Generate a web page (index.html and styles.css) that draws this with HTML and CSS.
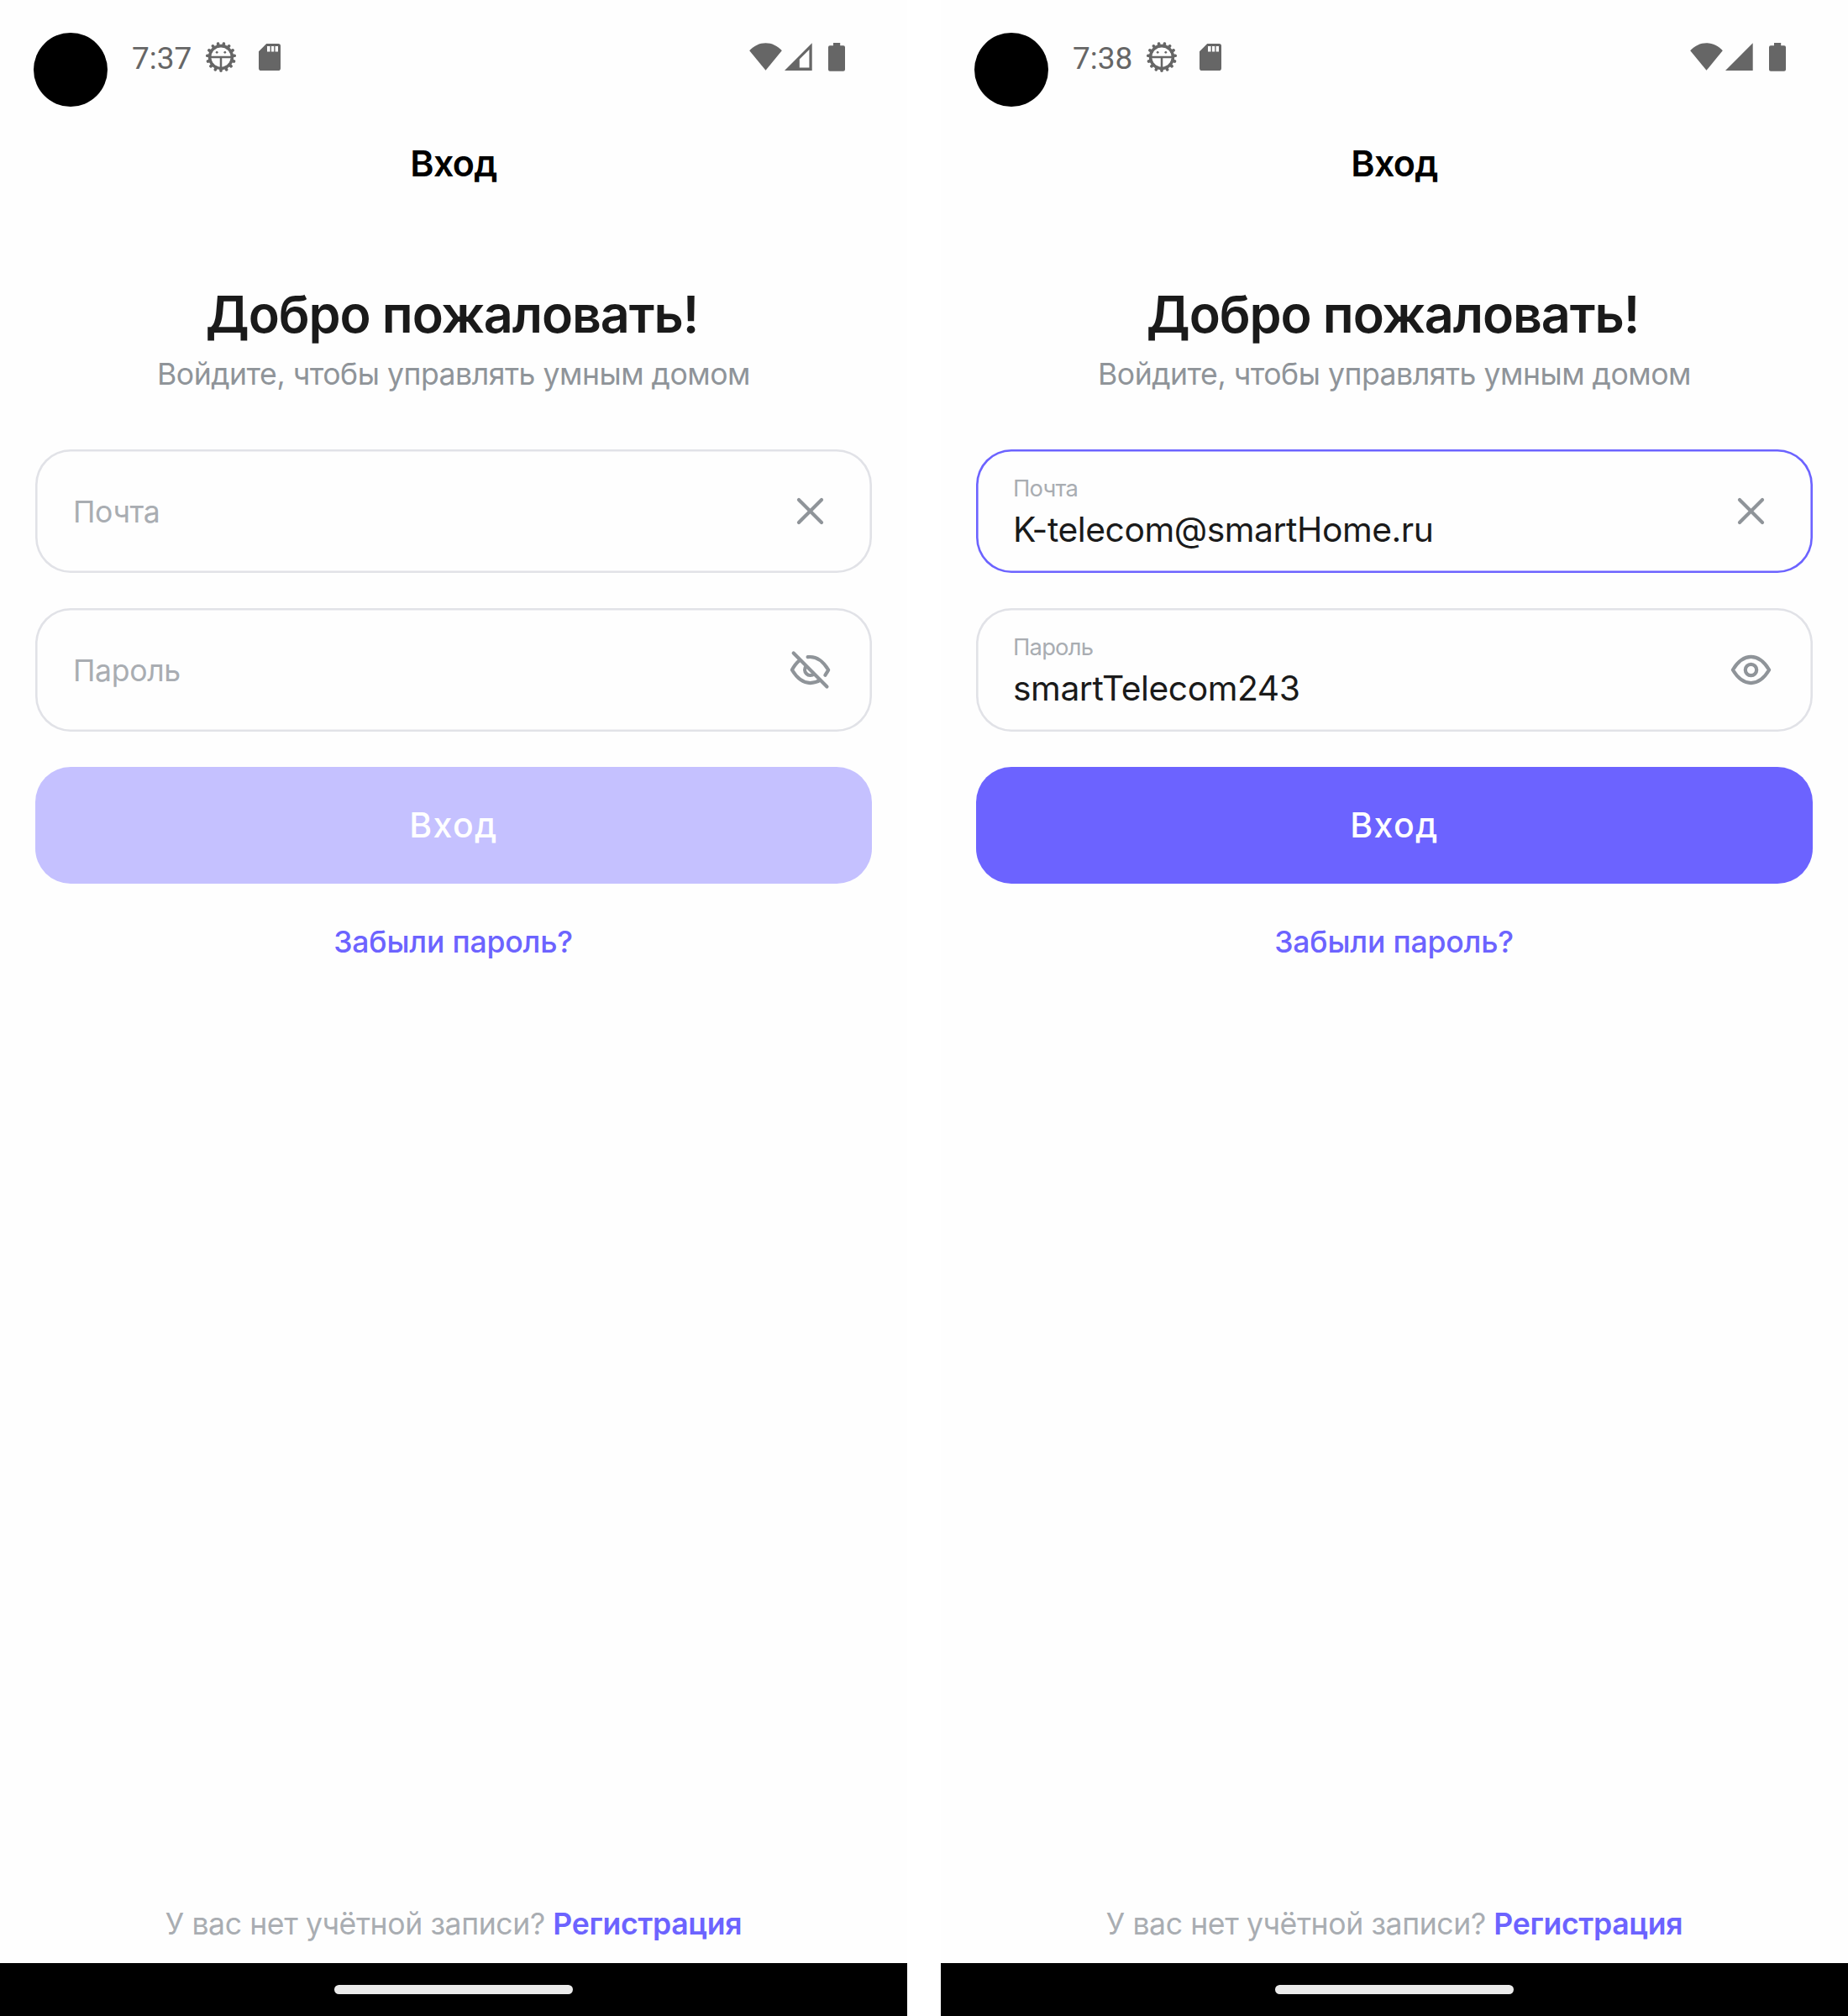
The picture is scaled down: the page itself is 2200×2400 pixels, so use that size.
FILE: index.html
```html
<!DOCTYPE html>
<html lang="ru">
<head>
<meta charset="utf-8">
<title>Вход</title>
<link rel="stylesheet" href="styles.css">
</head>
<body>
<svg class="sprite" aria-hidden="true">
  <symbol id="debug" viewBox="-18 -18 36 36">
    <path d="M0 13.5V16.2M5.49 12.34L6.7 14.9M10.03 9.03L12.1 10.9M12.84 4.17L15.5 5.03M13.43-1.42L16.2-1.7M11.69-6.75L14.1-8.15M7.94-10.92L9.6-13.2M2.81-13.2L3.4-15.9M-5.49 12.34L-6.7 14.9M-10.03 9.03L-12.1 10.9M-12.84 4.17L-15.5 5.03M-13.43-1.42L-16.2-1.7M-11.69-6.75L-14.1-8.15M-7.94-10.92L-9.6-13.2M-2.81-13.2L-3.4-15.9" fill="none" stroke="currentColor" stroke-width="3.6" stroke-linecap="round"/>
    <circle r="13.4" fill="none" stroke="currentColor" stroke-width="3.6"/>
    <path d="M-12 0H12M0 0V12" fill="none" stroke="currentColor" stroke-width="2.5"/>
    <circle cx="-4.8" cy="-5.7" r="1.4" fill="currentColor"/><circle cx="4.8" cy="-5.7" r="1.4" fill="currentColor"/>
  </symbol>
  <symbol id="sd" viewBox="0 0 26 32">
    <path fill="currentColor" fill-rule="evenodd" d="M9.2 0H23.2A2.8 2.8 0 0 1 26 2.8V29.2A2.8 2.8 0 0 1 23.2 32H2.8A2.8 2.8 0 0 1 0 29.2V9.2ZM10 3V9.6H13.6V3ZM15 3V9.6H18.2V3ZM19.6 3V9.6H23V3Z"/>
  </symbol>
  <symbol id="wifi" viewBox="0 0 39 34"><path fill="currentColor" d="M.2 9.3C5.4 3.5 12 .2 19.5.2S33.6 3.5 38.8 9.3L19.5 32.8Z"/></symbol>
  <symbol id="signal-half" viewBox="0 0 33 34"><path fill="currentColor" fill-rule="evenodd" d="M0 33L32.7 .3V33ZM17.8 19.4V29.6H29.4V8Z"/></symbol>
  <symbol id="signal-full" viewBox="0 0 33 34"><path fill="currentColor" d="M0 33L32.7 .3V33Z"/></symbol>
  <symbol id="battery" viewBox="0 0 20 34"><path fill="currentColor" d="M6 0H14.2V3.3H18A2 2 0 0 1 20 5.3V31.8A2 2 0 0 1 18 33.8H2A2 2 0 0 1 0 31.8V5.3A2 2 0 0 1 2 3.3H6Z"/></symbol>
  <symbol id="clear" viewBox="0 0 24 24"><path d="M6.85 6.85L17.15 17.15M17.15 6.85L6.85 17.15"/></symbol>
  <symbol id="eye" viewBox="0 0 24 24">
    <path d="M3.75 12C6 8.3 8.8 6.08 12 6.08S18 8.3 20.25 12C18 15.7 15.2 17.92 12 17.92S6 15.7 3.75 12Z"/>
    <circle cx="12" cy="12" r="2.55"/>
  </symbol>
  <symbol id="eye-off" viewBox="0 0 24 24">
    <path d="M10.9 6.17C15 5.6 17.9 8.1 20.25 12C19.8 12.9 19.3 13.6 18.8 14.4M7.2 7.7C5.8 8.8 4.7 10.3 3.75 12C6 15.7 8.8 17.92 12 17.92C13.7 17.92 15.2 17.5 16.6 16.6M10.2 10.2A2.55 2.55 0 0 0 13.8 13.8M4.45 4.4L19.6 19.6"/>
  </symbol>
</svg>

<main class="board">
  <section class="screen">
    <div class="camera"></div>
    <div class="status">
      <span class="clock">7:37</span>
      <svg class="ic-debug"><use href="#debug"/></svg>
      <svg class="ic-sd"><use href="#sd"/></svg>
      <span class="spacer"></span>
      <svg class="ic-wifi"><use href="#wifi"/></svg>
      <svg class="ic-signal"><use href="#signal-half"/></svg>
      <svg class="ic-battery"><use href="#battery"/></svg>
    </div>
    <header class="topbar">Вход</header>
    <h1 class="welcome">Добро пожаловать!</h1>
    <p class="subtitle">Войдите, чтобы управлять умным домом</p>
    <form class="form">
      <div class="field">
        <div class="field-body"><span class="placeholder">Почта</span></div>
        <svg class="ic-field"><use href="#clear"/></svg>
      </div>
      <div class="field">
        <div class="field-body"><span class="placeholder">Пароль</span></div>
        <svg class="ic-field"><use href="#eye-off"/></svg>
      </div>
      <button class="submit" type="button" disabled>Вход</button>
    </form>
    <a class="forgot">Забыли пароль?</a>
    <p class="signup">У вас нет учётной записи? <a class="signup-link">Регистрация</a></p>
    <footer class="navbar"><span class="handle"></span></footer>
  </section>

  <section class="screen">
    <div class="camera"></div>
    <div class="status">
      <span class="clock">7:38</span>
      <svg class="ic-debug"><use href="#debug"/></svg>
      <svg class="ic-sd"><use href="#sd"/></svg>
      <span class="spacer"></span>
      <svg class="ic-wifi"><use href="#wifi"/></svg>
      <svg class="ic-signal"><use href="#signal-full"/></svg>
      <svg class="ic-battery"><use href="#battery"/></svg>
    </div>
    <header class="topbar">Вход</header>
    <h1 class="welcome">Добро пожаловать!</h1>
    <p class="subtitle">Войдите, чтобы управлять умным домом</p>
    <form class="form">
      <div class="field focused">
        <div class="field-body"><span class="label">Почта</span><span class="value">K-telecom@smartHome.ru</span></div>
        <svg class="ic-field"><use href="#clear"/></svg>
      </div>
      <div class="field">
        <div class="field-body"><span class="label">Пароль</span><span class="value">smartTelecom243</span></div>
        <svg class="ic-field"><use href="#eye"/></svg>
      </div>
      <button class="submit" type="button">Вход</button>
    </form>
    <a class="forgot">Забыли пароль?</a>
    <p class="signup">У вас нет учётной записи? <a class="signup-link">Регистрация</a></p>
    <footer class="navbar"><span class="handle"></span></footer>
  </section>
</main>
</body>
</html>
```
FILE: styles.css
```css
* { box-sizing: border-box; }

body {
  margin: 0;
  background: #fff;
  font-family: Inter, "Liberation Sans", sans-serif;
  color: #1a1a1a;
}

.sprite { display: none; }

.board {
  display: flex;
  gap: 40px;
  width: 2200px;
  height: 2400px;
}

.screen {
  position: relative;
  display: flex;
  flex-direction: column;
  width: 1080px;
  background: #fefefe;
}

.camera {
  position: absolute;
  left: 40px;
  top: 39px;
  width: 88px;
  height: 88px;
  border-radius: 50%;
  background: #000;
}

/* status bar */
.status {
  display: flex;
  align-items: center;
  height: 136px;
  padding: 0 74px 0 157px;
  color: #666;
}

.clock {
  width: 88px;
  padding-top: 3px;
  font: 400 37px/46px Roboto, sans-serif;
}

.ic-debug { width: 36px; height: 36px; margin-right: 27px; }
.ic-sd { width: 26px; height: 32px; }
.spacer { flex: 1; }
.ic-wifi { width: 39px; height: 34px; margin-right: 3px; }
.ic-signal { width: 33px; height: 34px; margin-right: 19px; }
.ic-battery { width: 20px; height: 34px; }

.topbar {
  height: 116px;
  font-size: 43px;
  font-weight: 600;
  line-height: 116px;
  letter-spacing: -0.7px;
  text-align: center;
  color: #000;
}

.welcome {
  margin: 85px 0 11px;
  padding-right: 4px;
  font-size: 61px;
  font-weight: 600;
  line-height: 74px;
  letter-spacing: -1.1px;
  text-align: center;
}

.subtitle {
  margin: 0 0 65px;
  font-size: 35.6px;
  line-height: 48px;
  letter-spacing: -0.48px;
  text-align: center;
  color: #8f9499;
}

/* form */
.form {
  display: flex;
  flex-direction: column;
  gap: 42px;
  padding: 0 42px;
}

.field {
  display: flex;
  align-items: center;
  justify-content: space-between;
  height: 147px;
  padding: 0 42px 0 44px;
  border-radius: 42px;
  box-shadow: inset 0 0 0 2.6px #e1e2e7;
}

.field.focused { box-shadow: inset 0 0 0 2.6px #6c63ff; }

.field-body { display: flex; flex-direction: column; gap: 7px; }

.placeholder {
  padding: 2px 0 0 1px;
  font-size: 35.6px;
  line-height: 46px;
  letter-spacing: -0.35px;
  color: #a9adb2;
}

.label {
  padding-top: 2px;
  font-size: 27.4px;
  line-height: 34px;
  letter-spacing: -0.8px;
  color: #a9adb2;
}

.value {
  font-size: 40.8px;
  line-height: 50px;
  letter-spacing: -0.44px;
}

.ic-field {
  width: 63px;
  height: 63px;
  fill: none;
  stroke: #8f9499;
  stroke-width: 1.6;
  stroke-linecap: round;
  stroke-linejoin: round;
}

.submit {
  height: 139px;
  padding: 0;
  border: 0;
  border-radius: 42px;
  background: #6c63ff;
  font: 500 41px/139px Inter, "Liberation Sans", sans-serif;
  letter-spacing: 1.4px;
  color: #fff;
}

.submit:disabled { background: #c5c1ff; }

.forgot {
  margin-top: 47px;
  padding-right: 1px;
  font-size: 35.6px;
  font-weight: 500;
  line-height: 46px;
  letter-spacing: -0.19px;
  text-align: center;
  color: #6c63ff;
}

.signup {
  margin: auto 0 23px;
  font-size: 35.6px;
  line-height: 46px;
  letter-spacing: -0.4px;
  text-align: center;
  color: #a9adb2;
}

.signup-link {
  font-weight: 600;
  letter-spacing: -0.3px;
  color: #6c63ff;
}

.navbar {
  display: flex;
  align-items: center;
  justify-content: center;
  height: 63px;
  background: #000;
}

.handle {
  width: 284px;
  height: 11px;
  border-radius: 5.5px;
  background: #ebebeb;
}
```
